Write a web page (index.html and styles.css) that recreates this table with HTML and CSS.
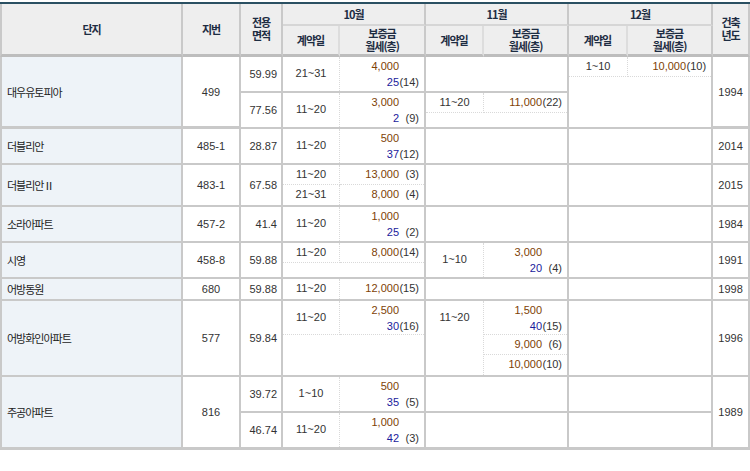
FILE: index.html
```html
<!DOCTYPE html>
<html lang="ko">
<head>
<meta charset="utf-8">
<title>실거래가</title>
<link rel="stylesheet" href="styles.css">
</head>
<body>
<div class="wrap">
<table class="t">
  <colgroup>
    <col class="c0"><col class="c1"><col class="c2">
    <col class="c3"><col class="c4"><col class="c5"><col class="c6"><col class="c7"><col class="c8">
    <col class="c9">
  </colgroup>
  <thead>
    <tr class="hr1">
      <th rowspan="2" class="first">단지</th>
      <th rowspan="2">지번</th>
      <th rowspan="2"><div class="two">전용<br>면적</div></th>
      <th colspan="2"><div class="mon">10월</div></th>
      <th colspan="2"><div class="mon">11월</div></th>
      <th colspan="2"><div class="mon">12월</div></th>
      <th rowspan="2"><div class="two">건축<br>년도</div></th>
    </tr>
    <tr class="hr2">
      <th class="sub">계약일</th><th><div class="two">보증금<br>월세(층)</div></th>
      <th class="sub">계약일</th><th><div class="two">보증금<br>월세(층)</div></th>
      <th class="sub">계약일</th><th><div class="two">보증금<br>월세(층)</div></th>
    </tr>
  </thead>
  <tbody>
    <!-- 대우유토피아 -->
    <tr>
      <td rowspan="2" class="first name">대우유토피아</td>
      <td rowspan="2" class="jb">499</td>
      <td class="ar">59.99</td>
      <td colspan="2" class="m"><div class="ent m10 full"><div class="d"><div class="dl dl2">21~31</div></div><div class="amts">
        <div class="it"><div class="ln"><span class="dep">4,000</span><span class="fl"></span></div><div class="ln"><span class="rent">25</span><span class="fl">(14)</span></div></div>
      </div></div></td>
      <td colspan="2" class="m"></td>
      <td colspan="2" rowspan="2" class="m"><div class="ent m12"><div class="d"><div class="dl dl1">1~10</div></div><div class="amts">
        <div class="it one"><div class="ln"><span class="dep">10,000</span><span class="fl">(10)</span></div></div>
      </div></div></td>
      <td rowspan="2" class="yr">1994</td>
    </tr>
    <tr>
      <td class="ar">77.56</td>
      <td colspan="2" class="m"><div class="ent m10 full"><div class="d"><div class="dl dl2">11~20</div></div><div class="amts">
        <div class="it"><div class="ln"><span class="dep">3,000</span><span class="fl"></span></div><div class="ln"><span class="rent">2</span><span class="fl">(9)</span></div></div>
      </div></div></td>
      <td colspan="2" class="m"><div class="ent m11"><div class="d"><div class="dl dl1">11~20</div></div><div class="amts">
        <div class="it one"><div class="ln"><span class="dep">11,000</span><span class="fl">(22)</span></div></div>
      </div></div></td>
    </tr>
    <!-- 더블리안 -->
    <tr>
      <td class="first name">더블리안</td>
      <td class="jb">485-1</td>
      <td class="ar">28.87</td>
      <td colspan="2" class="m"><div class="ent m10 full"><div class="d"><div class="dl dl2">11~20</div></div><div class="amts">
        <div class="it"><div class="ln"><span class="dep">500</span><span class="fl"></span></div><div class="ln"><span class="rent">37</span><span class="fl">(12)</span></div></div>
      </div></div></td>
      <td colspan="2" class="m"></td>
      <td colspan="2" class="m"></td>
      <td class="yr">2014</td>
    </tr>
    <!-- 더블리안II -->
    <tr>
      <td class="first name">더블리안Ⅱ</td>
      <td class="jb">483-1</td>
      <td class="ar">67.58</td>
      <td colspan="2" class="m">
        <div class="ent m10"><div class="d"><div class="dl dl1">11~20</div></div><div class="amts">
          <div class="it one"><div class="ln"><span class="dep">13,000</span><span class="fl">(3)</span></div></div>
        </div></div>
        <div class="ent m10 full"><div class="d"><div class="dl dl1">21~31</div></div><div class="amts">
          <div class="it one"><div class="ln"><span class="dep">8,000</span><span class="fl">(4)</span></div></div>
        </div></div>
      </td>
      <td colspan="2" class="m"></td>
      <td colspan="2" class="m"></td>
      <td class="yr">2015</td>
    </tr>
    <!-- 소라아파트 -->
    <tr>
      <td class="first name">소라아파트</td>
      <td class="jb">457-2</td>
      <td class="ar">41.4</td>
      <td colspan="2" class="m"><div class="ent m10 full"><div class="d"><div class="dl dl2">11~20</div></div><div class="amts">
        <div class="it"><div class="ln"><span class="dep">1,000</span><span class="fl"></span></div><div class="ln"><span class="rent">25</span><span class="fl">(2)</span></div></div>
      </div></div></td>
      <td colspan="2" class="m"></td>
      <td colspan="2" class="m"></td>
      <td class="yr">1984</td>
    </tr>
    <!-- 시영 -->
    <tr>
      <td class="first name">시영</td>
      <td class="jb">458-8</td>
      <td class="ar">59.88</td>
      <td colspan="2" class="m"><div class="ent m10"><div class="d"><div class="dl dl1">11~20</div></div><div class="amts">
        <div class="it one"><div class="ln"><span class="dep">8,000</span><span class="fl">(14)</span></div></div>
      </div></div></td>
      <td colspan="2" class="m"><div class="ent m11 full"><div class="d"><div class="dl dl2">1~10</div></div><div class="amts">
        <div class="it"><div class="ln"><span class="dep">3,000</span><span class="fl"></span></div><div class="ln"><span class="rent">20</span><span class="fl">(4)</span></div></div>
      </div></div></td>
      <td colspan="2" class="m"></td>
      <td class="yr">1991</td>
    </tr>
    <!-- 어방동원 -->
    <tr>
      <td class="first name">어방동원</td>
      <td class="jb">680</td>
      <td class="ar">59.88</td>
      <td colspan="2" class="m"><div class="ent m10 full"><div class="d"><div class="dl dl1">11~20</div></div><div class="amts">
        <div class="it one"><div class="ln"><span class="dep">12,000</span><span class="fl">(15)</span></div></div>
      </div></div></td>
      <td colspan="2" class="m"></td>
      <td colspan="2" class="m"></td>
      <td class="yr">1998</td>
    </tr>
    <!-- 어방화인아파트 -->
    <tr>
      <td class="first name">어방화인아파트</td>
      <td class="jb">577</td>
      <td class="ar">59.84</td>
      <td colspan="2" class="m"><div class="ent m10"><div class="d"><div class="dl dl2">11~20</div></div><div class="amts">
        <div class="it"><div class="ln"><span class="dep">2,500</span><span class="fl"></span></div><div class="ln"><span class="rent">30</span><span class="fl">(16)</span></div></div>
      </div></div></td>
      <td colspan="2" class="m"><div class="ent m11 full"><div class="d"><div class="dl dl2">11~20</div></div><div class="amts">
        <div class="it"><div class="ln"><span class="dep">1,500</span><span class="fl"></span></div><div class="ln"><span class="rent">40</span><span class="fl">(15)</span></div></div>
        <div class="it one"><div class="ln"><span class="dep">9,000</span><span class="fl">(6)</span></div></div>
        <div class="it one"><div class="ln"><span class="dep">10,000</span><span class="fl">(10)</span></div></div>
      </div></div></td>
      <td colspan="2" class="m"></td>
      <td class="yr">1996</td>
    </tr>
    <!-- 주공아파트 -->
    <tr>
      <td rowspan="2" class="first name">주공아파트</td>
      <td rowspan="2" class="jb">816</td>
      <td class="ar">39.72</td>
      <td colspan="2" class="m"><div class="ent m10 full"><div class="d"><div class="dl dl2">1~10</div></div><div class="amts">
        <div class="it"><div class="ln"><span class="dep">500</span><span class="fl"></span></div><div class="ln"><span class="rent">35</span><span class="fl">(5)</span></div></div>
      </div></div></td>
      <td colspan="2" class="m"></td>
      <td colspan="2" class="m"></td>
      <td rowspan="2" class="yr">1989</td>
    </tr>
    <tr class="last">
      <td class="ar">46.74</td>
      <td colspan="2" class="m"><div class="ent m10 full"><div class="d"><div class="dl dl2">11~20</div></div><div class="amts">
        <div class="it"><div class="ln"><span class="dep">1,000</span><span class="fl"></span></div><div class="ln"><span class="rent">42</span><span class="fl">(3)</span></div></div>
      </div></div></td>
      <td colspan="2" class="m"></td>
      <td colspan="2" class="m"></td>
    </tr>
  </tbody>
</table>
</div>
</body>
</html>
```

FILE: styles.css
```css
* { box-sizing: border-box; }

body {
  margin: 0;
  background: #ffffff;
  font-family: "Liberation Sans", "Noto Sans CJK KR", sans-serif;
  font-size: 11px;
  color: #333333;
}

.wrap {
  padding-top: 2px;
}

.t {
  width: 750px;
  table-layout: fixed;
  border-collapse: separate;
  border-spacing: 0;
  border-top: 2px solid #2a5062;
}

.c0 { width: 183px; }
.c1 { width: 58px; }
.c2 { width: 42px; }
.c3 { width: 57px; }
.c4 { width: 86px; }
.c5 { width: 58px; }
.c6 { width: 85px; }
.c7 { width: 59px; }
.c8 { width: 85px; }
.c9 { width: 37px; }

.t th,
.t td {
  padding: 0;
  border-right: 2px solid #c9c9c9;
  border-bottom: 2px solid #c9c9c9;
}

.t .first {
  border-left: 2px solid #c9c9c9;
}

.t th {
  background: #eeeeee;
  color: #1d2c42;
  font-family: "Noto Sans CJK KR", sans-serif;
  font-weight: bold;
  font-size: 11px;
  letter-spacing: -1px;
  line-height: 13px;
  text-align: center;
  vertical-align: middle;
}

.hr1 th {
  border-bottom-color: #d6d6d6;
}

.hr2 th {
  border-bottom: 3px solid #bdbdbd;
  height: 31px;
}

.hr1 th[rowspan] {
  border-bottom: 3px solid #bdbdbd;
}

.hr2 th.sub {
  border-right-color: #dddddd;
}

.mon {
  height: 20px;
  line-height: 20px;
}

.two {
  line-height: 13px;
}

/* body */
.t td {
  vertical-align: middle;
  white-space: nowrap;
}

.name {
  background: #eef3f8;
  padding-left: 5px !important;
  font-family: "Noto Sans CJK KR", sans-serif;
  letter-spacing: -1px;
  color: #222222;
}

.jb { text-align: center; }
.ar { text-align: right; padding-right: 4px !important; }
.yr { text-align: center; }

.t td.m {
  vertical-align: top;
}

.ent {
  display: flex;
}

.d {
  flex: none;
  border-right: 1px dotted #d9d9d9;
  border-bottom: 1px dotted #d9d9d9;
  text-align: center;
}

.m10 .d { width: 57px; }
.m11 .d { width: 58px; }
.m12 .d { width: 59px; }

.dl1 { height: 19px; line-height: 19px; }
.dl2 { height: 33px; line-height: 33px; }

.amts {
  flex: 1;
}

.it {
  height: 34px;
  padding-top: 1px;
  padding-right: 5px;
  border-bottom: 1px dotted #d9d9d9;
}

.it.one {
  height: 20px;
  padding-top: 0;
}

.ent.full .d,
.ent.full .it:last-child {
  border-bottom: 0;
}

.ln {
  display: flex;
  justify-content: flex-end;
  line-height: 16px;
}

.it.one .ln {
  line-height: 19px;
}

.fl {
  width: 20px;
  text-align: right;
  color: #333333;
}

.dep { color: #7e4206; }
.rent { color: #1a1a9c; }

tr.last td,
.t td[rowspan="2"].first,
.t td.jb[rowspan="2"],
.t td.yr[rowspan="2"] {
  border-bottom-width: 3px;
}
```
